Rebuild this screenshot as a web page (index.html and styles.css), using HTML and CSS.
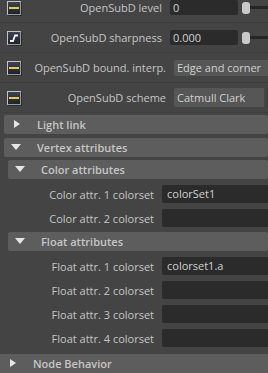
FILE: index.html
```html
<!DOCTYPE html>
<html lang="en">
<head>
    <meta charset="UTF-8">
    <title>Attribute editor</title>
    <link rel="stylesheet" href="styles.css">
</head>
<body>
    <div class="panel">
        <div class="attrs">
            <div class="attr-row">
                <span class="icon"><span class="bar"></span></span>
                <span class="label">OpenSubD level</span>
                <span class="field num">0</span>
                <span class="slider"><span class="handle"></span><span class="track"></span></span>
            </div>
            <div class="attr-row">
                <span class="icon">
                    <svg width="10" height="10" viewBox="0 0 10 10"><path d="M1 8 H4 L6 2.5 H9" fill="none" stroke="#f2f2f2" stroke-width="1.8"/></svg>
                </span>
                <span class="label">OpenSubD sharpness</span>
                <span class="field num">0.000</span>
                <span class="slider"><span class="handle"></span><span class="track"></span></span>
            </div>
            <div class="attr-row">
                <span class="icon"><span class="bar"></span></span>
                <span class="label">OpenSubD bound. interp.</span>
                <span class="dropdown">Edge and corner</span>
            </div>
            <div class="attr-row">
                <span class="icon"><span class="bar"></span></span>
                <span class="label">OpenSubD scheme</span>
                <span class="dropdown short">Catmull Clark</span>
                <span class="edge"></span>
            </div>
        </div>

        <div class="frame-head closed light">Light link</div>

        <div class="frame-head open vertex">Vertex attributes</div>
        <div class="frame-body">
            <div class="frame-head open sub color-head">Color attributes</div>
            <div class="set-rows">
                <div class="set-row"><span class="set-label">Color attr. 1 colorset</span><span class="field wide">colorSet1</span></div>
                <div class="set-row"><span class="set-label">Color attr. 2 colorset</span><span class="field wide"></span></div>
            </div>

            <div class="frame-head open sub float-head">Float attributes</div>
            <div class="set-rows">
                <div class="set-row"><span class="set-label">Float attr. 1 colorset</span><span class="field wide">colorset1.a</span></div>
                <div class="set-row"><span class="set-label">Float attr. 2 colorset</span><span class="field wide"></span></div>
                <div class="set-row"><span class="set-label">Float attr. 3 colorset</span><span class="field wide"></span></div>
                <div class="set-row"><span class="set-label">Float attr. 4 colorset</span><span class="field wide"></span></div>
            </div>
        </div>

        <div class="frame-head closed node">Node Behavior</div>
    </div>
</body>
</html>
```

FILE: styles.css
```css
body {
    margin: 0;
    background: #444444;
    font-family: "Open Sans", "DejaVu Sans", sans-serif;
    font-size: 11px;
    color: #c4c4c4;
    overflow: hidden;
}

.panel {
    width: 268px;
    height: 373px;
    overflow: hidden;
}

.attrs {
    margin-top: -7px;
}

.attr-row {
    display: flex;
    align-items: center;
    height: 29px;
    border-bottom: 1px solid #3d3d3d;
}

.icon {
    width: 14px;
    height: 14px;
    margin-left: 7px;
    box-sizing: border-box;
    border: 1px solid #9a9a9a;
    border-top-color: #c4c4c4;
    border-left-color: #c4c4c4;
    background: linear-gradient(#3c4250, #1f232b);
    box-shadow: 1px 1px 0 #2c2c2c;
    display: flex;
    align-items: center;
    justify-content: center;
}

.icon .bar {
    width: 10px;
    height: 2px;
    background: #e4c94a;
}

.label {
    flex: 1;
    text-align: right;
    padding-right: 8px;
    white-space: nowrap;
}

.field {
    background: #2b2b2b;
    border-radius: 2px;
    box-sizing: border-box;
    color: #d0d0d0;
    white-space: nowrap;
}

.field.num {
    width: 68px;
    height: 15px;
    line-height: 15px;
    padding-left: 3px;
}

.slider {
    width: 26px;
    display: flex;
    align-items: center;
    padding-left: 4px;
}

.handle {
    width: 8px;
    height: 12px;
    border-radius: 3px;
    background: #c9c9c9;
}

.track {
    flex: 1;
    height: 3px;
    background: #262626;
}

.dropdown {
    width: 94px;
    height: 16px;
    line-height: 16px;
    box-sizing: border-box;
    padding-left: 3px;
    background: #565656;
    border-radius: 2px 0 0 2px;
    color: #d0d0d0;
    white-space: nowrap;
    overflow: hidden;
}

.dropdown.short {
    width: 90px;
    height: 19px;
    line-height: 19px;
}

.edge {
    width: 1px;
    height: 19px;
    margin-left: 3px;
    background: #3a3a3a;
}

.frame-head {
    height: 19px;
    line-height: 19px;
    background: #5d5d5d;
    border-radius: 2px;
    font-weight: 600;
    color: #c6c6c6;
    position: relative;
    white-space: nowrap;
}

.frame-head::before {
    content: "";
    position: absolute;
    width: 0;
    height: 0;
}

.frame-head.closed::before {
    border-top: 4px solid transparent;
    border-bottom: 4px solid transparent;
    border-left: 6px solid #e6e6e6;
    top: 5px;
}

.frame-head.open::before {
    border-left: 5px solid transparent;
    border-right: 5px solid transparent;
    border-top: 6px solid #e6e6e6;
    top: 6px;
}

.light {
    margin: 2px 0 0 4px;
    padding-left: 33px;
}

.light::before {
    left: 10px;
}

.vertex {
    margin: 4px 0 0 4px;
    padding-left: 33px;
}

.vertex::before {
    left: 7px;
}

.frame-body {
    padding-left: 8px;
}

.sub {
    padding-left: 33px;
}

.sub::before {
    left: 7px;
}

.color-head {
    margin-top: 3px;
}

.float-head {
    margin-top: 2px;
}

.set-rows {
    margin-top: 3px;
}

.set-row {
    display: flex;
    align-items: center;
    height: 24px;
    margin-left: -8px;
}

.set-label {
    width: 154px;
    text-align: right;
    padding-right: 8px;
    box-sizing: content-box;
    white-space: nowrap;
}

.field.wide {
    flex: 1;
    height: 18px;
    line-height: 18px;
    padding-left: 5px;
    border-radius: 2px 0 0 2px;
}

.node {
    margin-top: 4px;
    padding-left: 33px;
    border-radius: 0;
}

.node::before {
    left: 10px;
}
```
